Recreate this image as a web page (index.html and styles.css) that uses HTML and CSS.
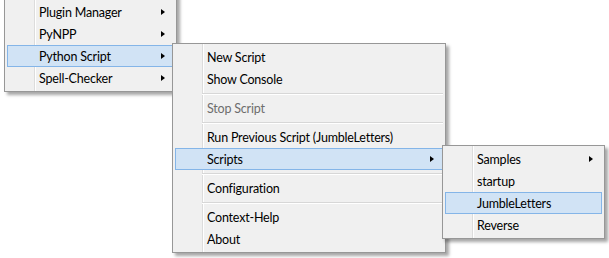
FILE: index.html
```html
<!DOCTYPE html>
<html>
<head>
<meta charset="utf-8">
<link rel="stylesheet" href="styles.css">
</head>
<body>
<div class="screen">
  <div class="menu m1">
    <div class="item"></div>
    <div class="item"></div>
    <div class="item sub">Plugin Manager<span class="arrow"></span></div>
    <div class="item sub">PyNPP<span class="arrow"></span></div>
    <div class="item sub hl">Python Script<span class="arrow"></span></div>
    <div class="item sub">Spell-Checker<span class="arrow"></span></div>
  </div>
  <div class="menu m2">
    <div class="item">New Script</div>
    <div class="item">Show Console</div>
    <div class="sep"></div>
    <div class="item disabled">Stop Script</div>
    <div class="sep"></div>
    <div class="item">Run Previous Script (JumbleLetters)</div>
    <div class="item sub hl">Scripts<span class="arrow"></span></div>
    <div class="sep"></div>
    <div class="item">Configuration</div>
    <div class="sep"></div>
    <div class="item">Context-Help</div>
    <div class="item">About</div>
  </div>
  <div class="menu m3">
    <div class="item sub">Samples<span class="arrow"></span></div>
    <div class="item">startup</div>
    <div class="item hl">JumbleLetters</div>
    <div class="item">Reverse</div>
  </div>
</div>
</body>
</html>
```
FILE: styles.css
```css
html, body {
  margin: 0;
  padding: 0;
  background: #ffffff;
}
.screen {
  position: relative;
  width: 609px;
  height: 258px;
  overflow: hidden;
  font-family: Lato, "Open Sans", sans-serif;
  font-size: 12.5px;
  letter-spacing: -0.2px;
  color: #000;
}
.menu {
  position: absolute;
  box-sizing: border-box;
  border: 1px solid #979797;
  padding: 2px;
  background:
    linear-gradient(to right, transparent 29px, #dcdcdc 29px, #dcdcdc 30px, #ffffff 30px, #ffffff 31px, transparent 31px),
    #f0f0f0;
  box-shadow: 3px 3px 3px rgba(0, 0, 0, 0.35);
}
.m1 { left: 4px; top: -46px; width: 173px; z-index: 1; }
.m2 { left: 172px; top: 43px; width: 274px; z-index: 2; }
.m3 { left: 442px; top: 145px; width: 163px; z-index: 3; }
.item {
  box-sizing: border-box;
  height: 22px;
  display: flex;
  align-items: center;
  border: 1px solid transparent;
  padding: 0 7px 0 31px;
  white-space: nowrap;
}
.item.hl {
  background: #d1e3f5;
  border-color: #84b5e8;
}
.item.disabled {
  color: #6d6d6d;
}
.arrow {
  margin-left: auto;
  width: 0;
  height: 0;
  border-top: 3.5px solid transparent;
  border-bottom: 3.5px solid transparent;
  border-left: 4px solid #000;
  margin-right: 1px;
}
.sep {
  height: 7px;
  box-sizing: border-box;
  padding-top: 3px;
  margin-left: 27px;
}
.sep::before {
  content: "";
  display: block;
  height: 1px;
  background: #d7d7d7;
  border-bottom: 1px solid #ffffff;
}
```
